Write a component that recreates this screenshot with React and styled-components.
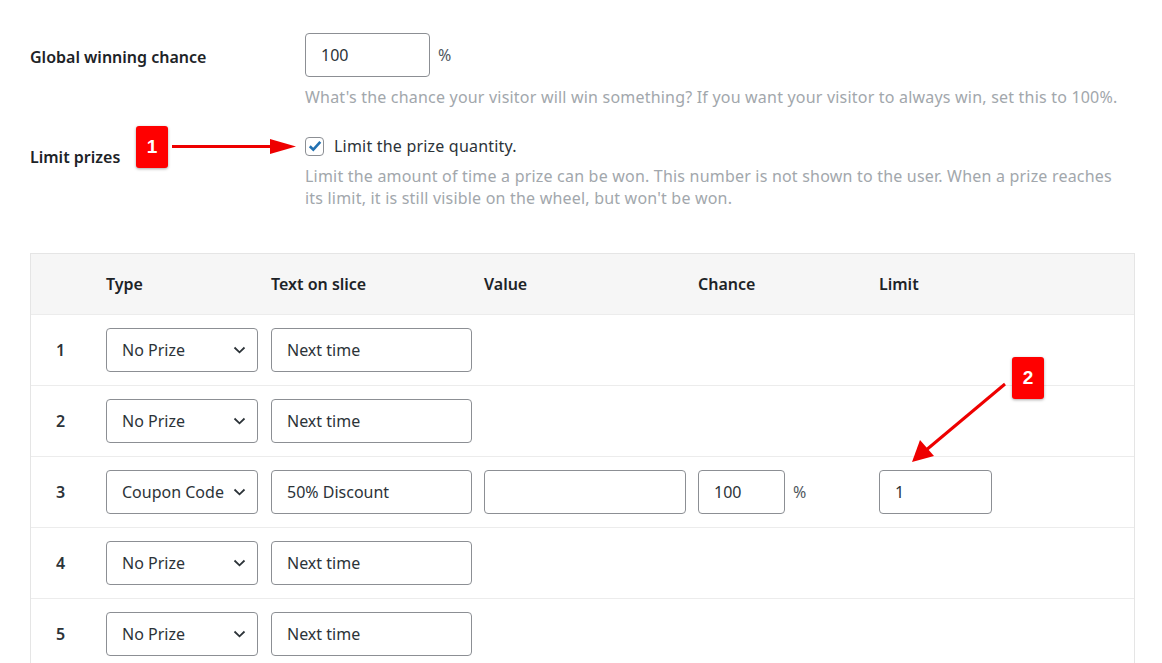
import React from "react";
import styled, { createGlobalStyle } from "styled-components";

const GlobalStyle = createGlobalStyle`
  html, body {
    margin: 0;
    padding: 0;
    background: #ffffff;
  }
  body {
    font-family: "Noto Sans", "Open Sans", sans-serif;
    font-size: 16px;
    color: #1d2327;
  }
`;

const Page = styled.div`
  position: relative;
  width: 1162px;
  height: 663px;
  overflow: hidden;
  padding: 33px 27px 0 30px;
  box-sizing: border-box;
`;

const FormRow = styled.div`
  display: grid;
  grid-template-columns: 275px 1fr;
  margin-bottom: ${(p) => p.gap || 0}px;
`;

const Label = styled.div`
  font-weight: 600;
  font-size: 16px;
  line-height: 22px;
  padding-top: ${(p) => p.top || 0}px;
`;

const Field = styled.div`
  display: flex;
  flex-direction: column;
`;

const Inline = styled.div`
  display: flex;
  align-items: center;
  gap: ${(p) => p.gap || 8}px;
`;

const TextInput = styled.input`
  box-sizing: border-box;
  width: ${(p) => p.w}px;
  height: 44px;
  border: 1px solid #8c8f94;
  border-radius: 4px;
  padding: 0 15px;
  font-family: inherit;
  font-size: 16px;
  color: #2c3338;
  background: #fff;
  outline: none;
`;

const Unit = styled.span`
  font-size: 16px;
  color: #50575e;
`;

const Description = styled.p`
  margin: ${(p) => p.top || 9}px 0 0;
  font-size: 16px;
  line-height: 22px;
  letter-spacing: 0.2px;
  color: #a2a7ac;
  max-width: 820px;
`;

const CheckLabel = styled.label`
  display: flex;
  align-items: center;
  gap: 10px;
  line-height: 22px;
  font-size: 16px;
  letter-spacing: 0.2px;
  color: #2c3338;
`;

const CheckBox = styled.span`
  box-sizing: border-box;
  width: 19px;
  height: 19px;
  border: 1px solid #8c8f94;
  border-radius: 4px;
  display: flex;
  align-items: center;
  justify-content: center;
`;

const Table = styled.div`
  margin-top: 44px;
  border: 1px solid #e5e5e5;
  border-bottom: none;
`;

const Row = styled.div`
  display: grid;
  grid-template-columns: 75px 165px 213px 214px 181px 1fr;
  align-items: center;
  height: ${(p) => (p.head ? 60 : 70)}px;
  background: ${(p) => (p.head ? "#f6f6f6" : "#fff")};
  border-bottom: 1px solid #ececec;
`;

const HeadCell = styled.div`
  font-weight: 600;
  font-size: 16px;
  color: #1d2327;
`;

const NumCell = styled.div`
  font-weight: 600;
  font-size: 16px;
  padding-left: 25px;
  color: #2c3338;
`;

const Cell = styled.div`
  display: flex;
  align-items: center;
  gap: 8px;
`;

const SelectWrap = styled.div`
  position: relative;
  width: 152px;
  height: 44px;
`;

const Select = styled.select`
  box-sizing: border-box;
  width: 100%;
  height: 44px;
  appearance: none;
  border: 1px solid #8c8f94;
  border-radius: 4px;
  padding: 0 24px 0 15px;
  font-family: inherit;
  font-size: 16px;
  color: #2c3338;
  background: #fff;
  outline: none;
`;

const Chevron = styled.svg`
  position: absolute;
  right: 12px;
  top: 18px;
  pointer-events: none;
`;

const Badge = styled.div`
  position: absolute;
  left: ${(p) => p.x}px;
  top: ${(p) => p.y}px;
  width: 32px;
  height: 42px;
  background: #ff0000;
  border-radius: 3px;
  box-shadow: 0 1px 3px rgba(0, 0, 0, 0.35);
  color: #fff;
  font-family: "Liberation Sans", Arial, sans-serif;
  font-weight: 700;
  font-size: 19px;
  display: flex;
  align-items: center;
  justify-content: center;
`;

const Overlay = styled.svg`
  position: absolute;
  left: 0;
  top: 0;
  pointer-events: none;
`;

const rows = [
  { n: 1, type: "No Prize", text: "Next time" },
  { n: 2, type: "No Prize", text: "Next time" },
  { n: 3, type: "Coupon Code", text: "50% Discount", full: true },
  { n: 4, type: "No Prize", text: "Next time" },
  { n: 5, type: "No Prize", text: "Next time" },
];

const TypeSelect = ({ value }) => (
  <SelectWrap>
    <Select defaultValue={value}>
      <option>No Prize</option>
      <option>Coupon Code</option>
    </Select>
    <Chevron width="13" height="8" viewBox="0 0 13 8">
      <path d="M1.5 1.5 L6.5 6.3 L11.5 1.5" fill="none" stroke="#2c3338" strokeWidth="1.8" />
    </Chevron>
  </SelectWrap>
);

export default function App() {
  return (
    <>
      <GlobalStyle />
      <Page>
        <FormRow gap={27}>
          <Label top={13}>Global winning chance</Label>
          <Field>
            <Inline>
              <TextInput w={125} defaultValue="100" />
              <Unit>%</Unit>
            </Inline>
            <Description>
              What's the chance your visitor will win something? If you want your visitor to always win, set this to 100%.
            </Description>
          </Field>
        </FormRow>

        <FormRow>
          <Label top={11}>Limit prizes</Label>
          <Field>
            <CheckLabel>
              <CheckBox>
                <svg width="14" height="12" viewBox="0 0 14 12">
                  <path d="M1.8 6.2 L5.3 9.6 L12.3 1.8" fill="none" stroke="#2271b1" strokeWidth="2.6" />
                </svg>
              </CheckBox>
              Limit the prize quantity.
            </CheckLabel>
            <Description top={8}>
              Limit the amount of time a prize can be won. This number is not shown to the user. When a prize reaches its limit, it is still visible on the wheel, but won't be won.
            </Description>
          </Field>
        </FormRow>

        <Table>
          <Row head>
            <div />
            <HeadCell>Type</HeadCell>
            <HeadCell>Text on slice</HeadCell>
            <HeadCell>Value</HeadCell>
            <HeadCell>Chance</HeadCell>
            <HeadCell>Limit</HeadCell>
          </Row>
          {rows.map((r) => (
            <Row key={r.n}>
              <NumCell>{r.n}</NumCell>
              <Cell>
                <TypeSelect value={r.type} />
              </Cell>
              <Cell>
                <TextInput w={201} defaultValue={r.text} />
              </Cell>
              <Cell>{r.full && <TextInput w={202} defaultValue="" />}</Cell>
              <Cell>
                {r.full && (
                  <>
                    <TextInput w={87} defaultValue="100" />
                    <Unit>%</Unit>
                  </>
                )}
              </Cell>
              <Cell>{r.full && <TextInput w={113} defaultValue="1" />}</Cell>
            </Row>
          ))}
        </Table>

        <Badge x={136} y={126}>1</Badge>
        <Badge x={1012} y={357}>2</Badge>
        <Overlay width="1162" height="663">
          <line x1="172" y1="146.5" x2="278" y2="146.5" stroke="#ee0000" strokeWidth="3" />
          <polygon points="270,139 296,146.5 270,154" fill="#ee0000" />
          <line x1="1005" y1="384" x2="925" y2="451" stroke="#ee0000" strokeWidth="3" />
          <polygon points="912,462 920,440 934,456" fill="#ee0000" />
        </Overlay>
      </Page>
    </>
  );
}
